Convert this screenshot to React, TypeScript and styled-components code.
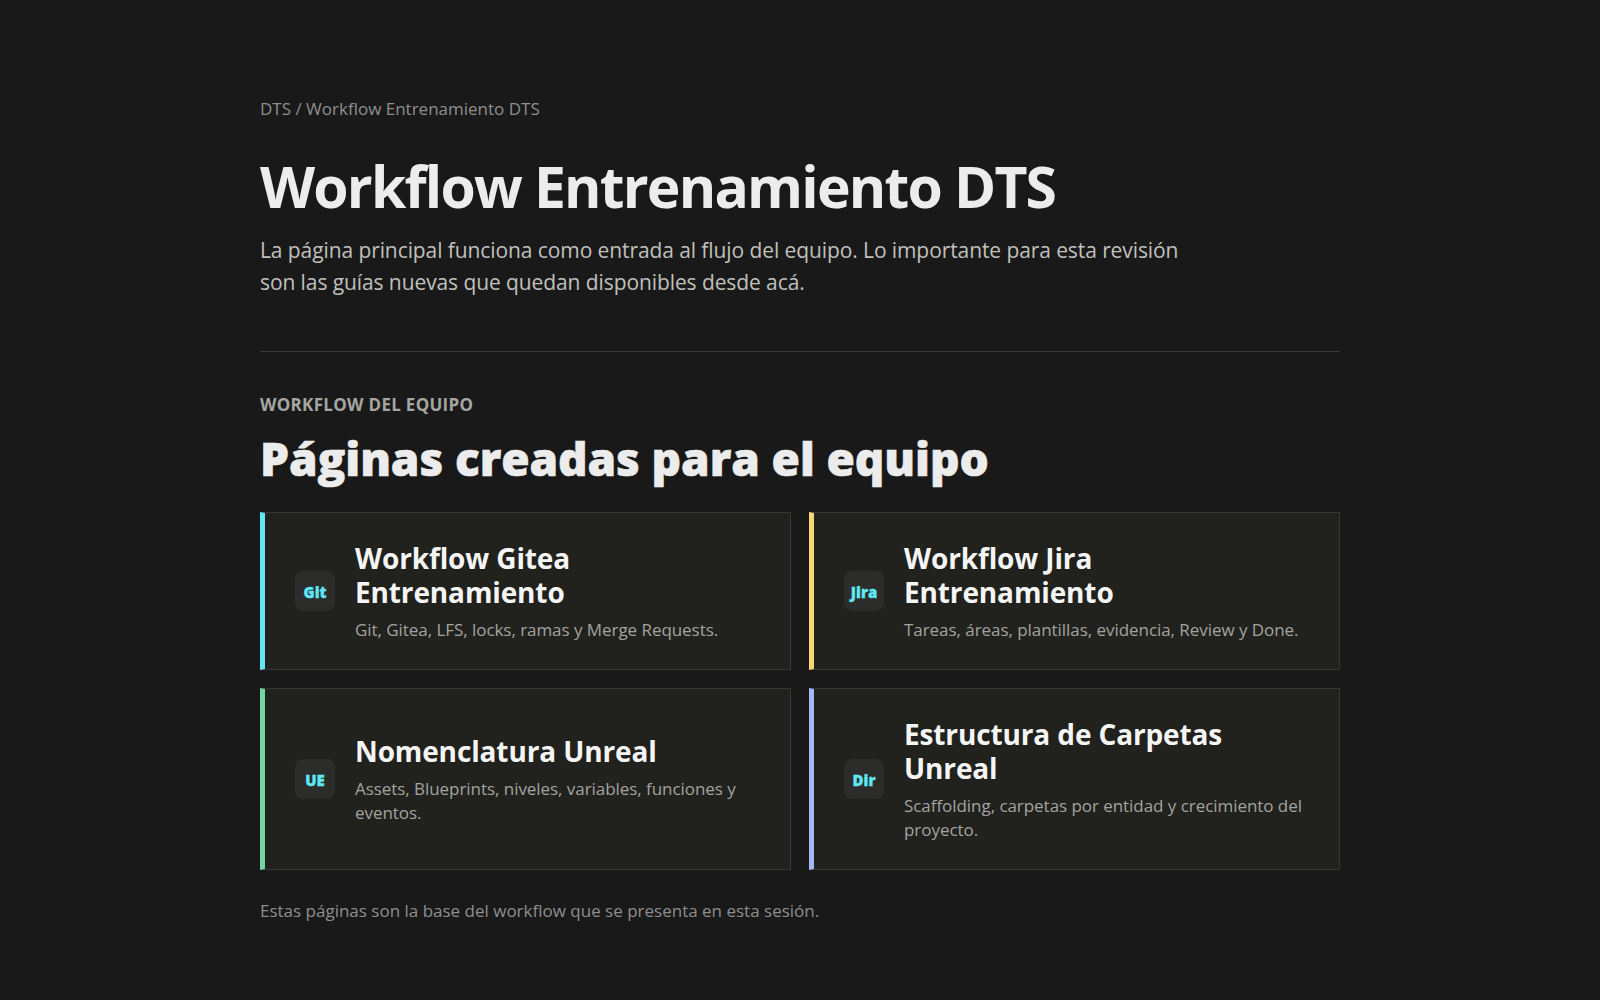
import styled, { createGlobalStyle } from 'styled-components';

const fontStack = '"Open Sans", "Noto Sans", "Liberation Sans", sans-serif';

const GlobalStyle = createGlobalStyle`
  html, body {
    margin: 0;
    padding: 0;
    background: #191919;
  }
  body {
    font-family: ${fontStack};
    color: #ececec;
  }
`;

const Page = styled.main`
  width: 1080px;
  height: 1000px;
  box-sizing: border-box;
  margin: 0 auto;
  padding-top: 96px;
`;

const Crumbs = styled.div`
  font-size: 17px;
  line-height: 25px;
  color: #8e8e8e;
`;

const Title = styled.h1`
  margin: 31px 0 0;
  font-size: 57px;
  line-height: 68px;
  font-weight: 700;
  color: #ececec;
  letter-spacing: -1.78px;
`;

const Lead = styled.p`
  margin: 14px 0 0;
  max-width: 940px;
  font-size: 21px;
  line-height: 32px;
  color: #c0c0bc;
  letter-spacing: -0.09px;
`;

const Rule = styled.hr`
  margin: 53px 0 0;
  border: 0;
  border-top: 1px solid #373737;
`;

const Eyebrow = styled.div`
  margin-top: 41px;
  font-size: 17px;
  line-height: 24px;
  font-weight: 700;
  color: #a5a5a1;
  letter-spacing: 0.3px;
`;

const Heading = styled.h2`
  margin: 11px 0 0;
  font-size: 46px;
  line-height: 60px;
  font-weight: 800;
  color: #ececec;
  letter-spacing: -0.1px;
  -webkit-text-stroke: 0.6px #ececec;
`;

const CardGrid = styled.div`
  margin-top: 24px;
  display: grid;
  grid-template-columns: 1fr 1fr;
  gap: 18px;
`;

const Card = styled.a<{ $accent: string }>`
  display: flex;
  align-items: center;
  gap: 20px;
  box-sizing: border-box;
  padding: 28px 30px 27.4px;
  background: #21211e;
  border: 1px solid #383836;
  border-left: 5px solid ${(p) => p.$accent};
`;

const Badge = styled.span`
  flex: none;
  display: flex;
  align-items: center;
  justify-content: center;
  box-sizing: border-box;
  width: 40px;
  height: 40px;
  padding-top: 1px;
  border-radius: 8px;
  background: #2c2c2a;
  color: #5ee9f5;
  font-size: 15px;
  font-weight: 800;
  -webkit-text-stroke: 0.3px #5ee9f5;
`;

const CardBody = styled.div`
  min-width: 0;
`;

const CardTitle = styled.h3`
  margin: 0;
  max-width: 385px;
  font-size: 28px;
  line-height: 34px;
  font-weight: 700;
  color: #f5f5f5;
  letter-spacing: -0.13px;
`;

const CardText = styled.p`
  margin: 9px 0 0;
  font-size: 17px;
  line-height: 1.4;
  color: #a3a3a0;
  letter-spacing: -0.05px;
`;

const Footnote = styled.p`
  margin: 29px 0 0;
  font-size: 17px;
  line-height: 24px;
  color: #8e8e8e;
`;

const cards = [
  {
    badge: 'Git',
    accent: '#63e6f2',
    title: 'Workflow Gitea Entrenamiento',
    text: 'Git, Gitea, LFS, locks, ramas y Merge Requests.',
  },
  {
    badge: 'Jira',
    accent: '#f7d774',
    title: 'Workflow Jira Entrenamiento',
    text: 'Tareas, áreas, plantillas, evidencia, Review y Done.',
  },
  {
    badge: 'UE',
    accent: '#71d69f',
    title: 'Nomenclatura Unreal',
    text: 'Assets, Blueprints, niveles, variables, funciones y eventos.',
  },
  {
    badge: 'Dir',
    accent: '#a3b8f5',
    title: 'Estructura de Carpetas Unreal',
    text: 'Scaffolding, carpetas por entidad y crecimiento del proyecto.',
  },
];

function App() {
  return (
    <>
      <GlobalStyle />
      <Page>
        <Crumbs>DTS / Workflow Entrenamiento DTS</Crumbs>
        <Title>Workflow Entrenamiento DTS</Title>
        <Lead>
          La página principal funciona como entrada al flujo del equipo. Lo importante para esta
          revisión son las guías nuevas que quedan disponibles desde acá.
        </Lead>
        <Rule />
        <Eyebrow>WORKFLOW DEL EQUIPO</Eyebrow>
        <Heading>Páginas creadas para el equipo</Heading>
        <CardGrid>
          {cards.map((card) => (
            <Card key={card.badge} $accent={card.accent}>
              <Badge>{card.badge}</Badge>
              <CardBody>
                <CardTitle>{card.title}</CardTitle>
                <CardText>{card.text}</CardText>
              </CardBody>
            </Card>
          ))}
        </CardGrid>
        <Footnote>Estas páginas son la base del workflow que se presenta en esta sesión.</Footnote>
      </Page>
    </>
  );
}

export default App;
